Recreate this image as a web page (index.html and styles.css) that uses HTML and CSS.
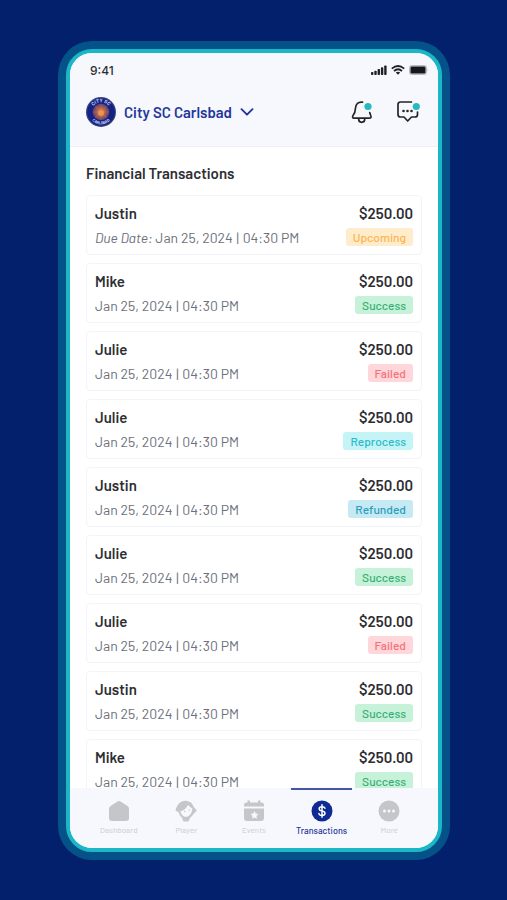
FILE: index.html
```html
<!DOCTYPE html>
<html lang="en">
<head>
<meta charset="utf-8">
<meta name="viewport" content="width=device-width, initial-scale=1">
<title>Financial Transactions</title>
<link rel="stylesheet" href="styles.css">
</head>
<body>
<div class="phone">
  <header class="header">
    <div class="status">
      <span>9:41</span>
      <span class="status-icons">
        <svg width="16" height="10" viewBox="0 0 16 10" fill="#202124"><rect y="7" width="2.400" height="3" rx=".8"/><rect x="3.300" y="5.800" width="2.400" height="4.200" rx=".8"/><rect x="6.600" y="4" width="2.400" height="6" rx=".8"/><rect x="9.900" y="2.200" width="2.400" height="7.800" rx=".8"/><rect x="13.200" y=".5" width="2.400" height="9.500" rx=".8"/></svg>
        <svg width="14" height="10" viewBox="0 0 14 10" fill="none" stroke="#202124" stroke-width="1.700"><path d="M.8 3.700Q7-1.700 13.200 3.700M3 6Q7 2.500 11 6"/><path d="M4.800 7.500Q7 5.800 9.200 7.500L7 9.800Z" fill="#202124" stroke="none"/></svg>
        <svg width="20" height="10" viewBox="0 0 20 10"><rect x=".5" y=".5" width="17" height="9" rx="2" fill="#dcdde2" stroke="#b9bbc1"/><rect x="1.500" y="1.500" width="15" height="7" rx="1.200" fill="#17181b"/><path d="M18.700 3.500q1.200 1.500 0 3z" fill="#a9abb0"/></svg>
      </span>
    </div>
    <div class="club-bar">
      <button class="club" type="button">
        <svg class="crest" viewBox="0 0 30 30" aria-hidden="true">
          <defs>
            <radialGradient id="sun"><stop offset="0" stop-color="#e5934f"/><stop offset=".45" stop-color="#b9654f"/><stop offset="1" stop-color="#59406f"/></radialGradient>
            <path id="top-arc" d="M5.300 15a9.700 9.700 0 0 1 19.400 0"/>
            <path id="bottom-arc" d="M2.700 15a12.300 12.300 0 0 0 24.600 0"/>
          </defs>
          <circle cx="15" cy="15" r="15" fill="#34477d"/>
          <circle cx="15" cy="15" r="13.800" fill="#152284"/>
          <circle cx="15" cy="15" r="8.300" fill="url(#sun)"/>
          <path d="M15 7v16M7 15h16M9.400 9.400l11.200 11.200M20.600 9.400L9.400 20.600" stroke="#d88352" stroke-width=".8" opacity=".35"/>
          <circle cx="15" cy="16" r="3" fill="#ed9b50" opacity=".8"/>
          <text class="crest-top"><textPath href="#top-arc" startOffset="50%">CITY SC</textPath></text>
          <text class="crest-bottom"><textPath href="#bottom-arc" startOffset="50%">CARLSBAD</textPath></text>
        </svg>
        <span>City SC Carlsbad</span>
        <svg width="14" height="8" viewBox="0 0 14 8" fill="none" stroke="#23369a" stroke-width="1.900" stroke-linecap="round" stroke-linejoin="round"><path d="M1.500 1.200L7 6.700l5.500-5.500"/></svg>
      </button>
      <div class="actions">
        <button type="button" aria-label="Notifications"><svg width="22" height="24" viewBox="0 0 22 24" fill="none" stroke="#24252a" stroke-width="1.700" stroke-linecap="round" stroke-linejoin="round"><path d="M11.500 2.200Q5 1.500 4.400 8.500Q4.400 12.500 2 15.500Q.8 18.200 3 18.200H18Q21 18.200 19.700 15.500L18.700 12.500"/><path d="M7.700 18.500v.8a3 3 0 0 0 6 0v-.8"/><circle cx="17" cy="6.500" r="3.600" fill="#28b9bd" stroke="none"/></svg></button>
        <button type="button" aria-label="Messages"><svg width="24" height="24" viewBox="0 0 24 24" fill="none" stroke="#24252a" stroke-width="1.700" stroke-linecap="round" stroke-linejoin="round"><path d="M15.500 2H4.500Q2 2 2 4.500V14.500Q2 17 4.500 17H8L11.700 21L15.500 17H19Q21.500 17 21.500 14.500V12"/><g fill="#24252a" stroke="none"><circle cx="7.500" cy="11" r="1.300"/><circle cx="11.500" cy="11" r="1.300"/><circle cx="15.500" cy="11" r="1.300"/></g><circle cx="20.300" cy="6.500" r="3.600" fill="#28b9bd" stroke="none"/></svg></button>
      </div>
    </div>
  </header>
  <main class="content">
    <h1>Financial Transactions</h1>
    <ul class="list">
      <li class="card"><div class="row"><h2>Justin</h2><strong>$250.00</strong></div><div class="row"><p><em>Due Date:</em> Jan 25, 2024 <i class="bar">|</i> 04:30 PM</p><span class="tag upcoming">Upcoming</span></div></li>
      <li class="card"><div class="row"><h2>Mike</h2><strong>$250.00</strong></div><div class="row"><p>Jan 25, 2024 <i class="bar">|</i> 04:30 PM</p><span class="tag success">Success</span></div></li>
      <li class="card"><div class="row"><h2>Julie</h2><strong>$250.00</strong></div><div class="row"><p>Jan 25, 2024 <i class="bar">|</i> 04:30 PM</p><span class="tag failed">Failed</span></div></li>
      <li class="card"><div class="row"><h2>Julie</h2><strong>$250.00</strong></div><div class="row"><p>Jan 25, 2024 <i class="bar">|</i> 04:30 PM</p><span class="tag reprocess">Reprocess</span></div></li>
      <li class="card"><div class="row"><h2>Justin</h2><strong>$250.00</strong></div><div class="row"><p>Jan 25, 2024 <i class="bar">|</i> 04:30 PM</p><span class="tag refunded">Refunded</span></div></li>
      <li class="card"><div class="row"><h2>Julie</h2><strong>$250.00</strong></div><div class="row"><p>Jan 25, 2024 <i class="bar">|</i> 04:30 PM</p><span class="tag success">Success</span></div></li>
      <li class="card"><div class="row"><h2>Julie</h2><strong>$250.00</strong></div><div class="row"><p>Jan 25, 2024 <i class="bar">|</i> 04:30 PM</p><span class="tag failed">Failed</span></div></li>
      <li class="card"><div class="row"><h2>Justin</h2><strong>$250.00</strong></div><div class="row"><p>Jan 25, 2024 <i class="bar">|</i> 04:30 PM</p><span class="tag success">Success</span></div></li>
      <li class="card"><div class="row"><h2>Mike</h2><strong>$250.00</strong></div><div class="row"><p>Jan 25, 2024 <i class="bar">|</i> 04:30 PM</p><span class="tag success">Success</span></div></li>
    </ul>
  </main>
  <nav class="nav">
    <a href="#dashboard"><svg viewBox="0 0 22 22"><path d="M9.500 1.500Q11 .3 12.500 1.500L19.500 6Q21 7 21 9V18Q21 21 18 21H4Q1 21 1 18V9Q1 7 2.500 6Z" fill="#c5c6ca"/></svg>Dashboard</a>
    <a href="#player"><svg viewBox="0 0 22 22"><path d="M.5 10.500Q2 4 6 2Q11-.5 16 2.500Q17.500 4 18.500 6.500L21.800 10.500L18.500 14Q16.500 17.500 13.500 18.500H8.500Q5 17 3.800 12.500Z" fill="#c5c6ca"/><path d="M5.200 11.500Q10.500 10 13 5L17.500 9L16.500 12.500Q15 15.500 12.500 16.700H9.500Q6.500 15.500 5.200 11.500Z" fill="#f7f8fd"/><path d="M9 11.300l1.500.5M13.500 10.300l1.500-.5" stroke="#c5c6ca" fill="none"/><path d="M7 18h8l-1.500 3.500h-5z" fill="#c5c6ca"/></svg>Player</a>
    <a href="#events"><svg viewBox="0 0 22 22"><path d="M1 6.500V5Q1 2.500 3.500 2.500H4.500V.5H7V2.500H15V.5H17.500V2.500H18.500Q21 2.500 21 5V6.500ZM1 8.500H21V18Q21 21 18 21H4Q1 21 1 18Z" fill="#c5c6ca"/><path d="M11.500 11l1.200 2.500 2.800.4-2 2 .5 2.800-2.500-1.300L9 18.700l.5-2.800-2-2 2.800-.4Z" fill="#f7f8fd"/></svg>Events</a>
    <a class="active" href="#transactions" aria-current="page"><svg viewBox="0 0 22 22"><circle cx="11" cy="11" r="10.500" fill="#102a93"/><path d="M14 8.300Q13.500 6.700 11 6.700Q8.200 6.700 8.200 8.800Q8.200 10.500 11 11Q14 11.500 14 13.300Q14 15.400 11 15.400Q8.200 15.400 7.900 13.500M11 4.800V17.200" fill="none" stroke="#fff" stroke-width="1.500" stroke-linecap="round"/></svg>Transactions</a>
    <a href="#more"><svg viewBox="0 0 22 22"><circle cx="11" cy="11" r="10.500" fill="#c5c6ca"/><g fill="#f7f8fd"><circle cx="6.500" cy="11" r="1.500"/><circle cx="11" cy="11" r="1.500"/><circle cx="15.500" cy="11" r="1.500"/></g></svg>More</a>
  </nav>
</div>
</body>
</html>
```
FILE: styles.css
```css
* { box-sizing: border-box; }
body {
  margin: 0;
  height: 100vh;
  padding: 49px 65px 48px 66px;
  background: #02206b;
  font-family: Barlow, Roboto, "Liberation Sans", sans-serif;
  color: #2d2e32;
}
h1, h2, p, ul { margin: 0; padding: 0; }
button { border: 0; padding: 0; background: none; font: inherit; color: inherit; }
svg { display: block; flex: none; }
.phone {
  display: flex;
  flex-direction: column;
  height: 100%;
  overflow: hidden;
  border: 4px solid #1bb7c6;
  border-radius: 26px;
  background: #fff;
  box-shadow: 0 0 0 8px #055289;
}
.header {
  flex: none;
  padding: 7px 9px 19px 16px;
  background: #f7f8fd;
  border-bottom: 1px solid #eff0f7;
}
.status {
  display: flex;
  align-items: center;
  justify-content: space-between;
  height: 20px;
  padding-left: 4px;
  font-family: Inter, "Liberation Sans", sans-serif;
  font-size: 12px;
  font-weight: 500;
}
.status-icons { display: flex; align-items: center; gap: 4px; }
.club-bar {
  display: flex;
  align-items: center;
  justify-content: space-between;
  margin-top: 17px;
  padding-right: 9px;
}
.club {
  display: flex;
  align-items: center;
  gap: 8px;
  color: #23369a;
  font-size: 15px;
  font-weight: 600;
}
.crest { width: 30px; height: 30px; }
.crest text { fill: #c6cff5; font-weight: 700; text-anchor: middle; }
.crest .crest-top { font-size: 5px; }
.crest .crest-bottom { font-size: 4px; }
.actions { display: flex; gap: 23px; }
.content { flex: 1; min-height: 0; overflow: hidden; padding: 16px 16px 0; }
h1 { font-size: 15px; line-height: 20px; font-weight: 600; }
.list { display: grid; gap: 8px; margin-top: 12px; list-style: none; }
.card {
  display: grid;
  align-content: start;
  gap: 5px;
  height: 60px;
  padding: 7px 8px;
  border: 1px solid #f3f4f8;
  border-radius: 4px;
}
.row {
  display: flex;
  align-items: flex-start;
  justify-content: space-between;
  height: 20px;
}
h2, strong { font-size: 15px; line-height: 20px; font-weight: 600; }
p { color: #6b707c; font-size: 14px; line-height: 20px; }
.bar { margin: 0 1px; font-style: normal; }
.tag {
  padding: 0 7px;
  border-radius: 3px;
  font-size: 12px;
  font-weight: 500;
  line-height: 18px;
}
.upcoming { background: #ffecca; color: #fbb454; }
.success { background: #c7f2da; color: #39ae73; }
.failed { background: #ffd6da; color: #f66f7b; }
.reprocess { background: #c5f4f7; color: #2cb9cb; }
.refunded { background: #c5eaf3; color: #2b9dbd; }
.nav {
  display: grid;
  grid-template-columns: repeat(5, 1fr);
  flex: none;
  height: 60px;
  padding: 0 15px;
  background: #f7f8fd;
}
.nav a {
  display: flex;
  flex-direction: column;
  align-items: center;
  gap: 3px;
  margin: 0 3px;
  padding-top: 10px;
  border-top: 2px solid transparent;
  color: #d3d4da;
  font-size: 8px;
  line-height: 11px;
  font-weight: 500;
  text-decoration: none;
}
.nav svg { width: 22px; height: 22px; }
.nav .active { border-color: #4156a6; color: #23369a; font-size: 9px; }
```
